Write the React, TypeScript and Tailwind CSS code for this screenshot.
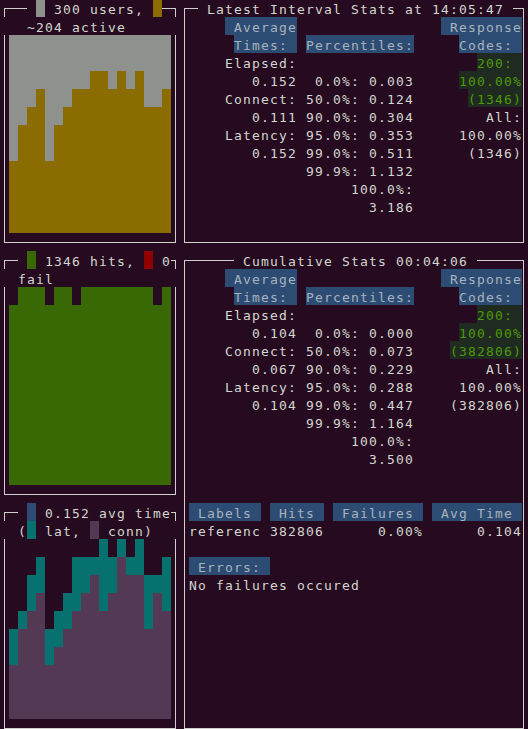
import React from 'react';

const users = [4, 6, 7, 8, 4, 6, 7, 8, 8, 9, 9, 8, 9, 8, 9, 7, 7, 8];
const hits = [10, 11, 11, 11, 10, 11, 11, 10, 11, 11, 11, 11, 11, 11, 11, 11, 10, 11];
const lat = [5, 6, 8, 9, 5, 6, 7, 9, 9, 9, 10, 9, 10, 9, 10, 8, 8, 9];
const conn = [3, 5, 6, 7, 3, 4, 5, 6, 7, 8, 6, 7, 9, 8, 8, 5, 7, 6];

type Cell = string | { t: string; hl?: 'blue' | 'green' };

function Hl({ t, kind }: { t: string; kind?: 'blue' | 'green' }) {
    if (kind === 'green') {
        return <span className="inline-block h-[18px] align-top bg-[#1f2b20] text-[#4e9a06]">{t}</span>;
    }
    return <span className="inline-block h-[18px] align-top bg-[#2d4c74] text-[#a9b3be]">{t}</span>;
}

function Block({ color }: { color: string }) {
    return <span className={`inline-block w-[9px] h-[18px] align-top ${color}`} />;
}

function StatCol({ rows, w }: { rows: Cell[]; w: string }) {
    return (
        <div className={`${w} flex flex-col items-end`}>
            {rows.map((r, i) => (
                <div key={i} className="h-[18px] leading-[21px] whitespace-pre">
                    {typeof r === 'string' ? r : <Hl t={r.t} kind={r.hl} />}
                </div>
            ))}
        </div>
    );
}

function Stats({ a, b, c }: { a: Cell[]; b: Cell[]; c: Cell[] }) {
    return (
        <div className="flex ml-[4px]">
            <StatCol rows={a} w="w-[108px]" />
            <StatCol rows={b} w="w-[117px]" />
            <StatCol rows={c} w="w-[108px]" />
        </div>
    );
}

const head = (blue: boolean): { a: Cell[]; b: Cell[]; c: Cell[] } => ({
    a: [{ t: ' Average' }, { t: 'Times: ' }],
    b: ['', { t: 'Percentiles:' }],
    c: [{ t: ' Response' }, { t: 'Codes: ' }],
});

export default function App() {
    const h = head(true);
    return (
        <div className="w-[528px] h-[729px] overflow-hidden bg-[#250a20] text-[#d3d7cf] font-['DejaVu_Sans_Mono',monospace] text-[13px] tracking-[1.173px]">
            <div className="flex mt-[-1px]">
                {/* left column: graphs */}
                <div className="w-[180px] shrink-0 flex flex-col">
                    {/* users */}
                    <div className="h-[252px] pt-[9px]">
                        <div className="ml-[4px] w-[172px] h-[235px] border border-[#cfd0cc]">
                            <div className="mt-[-10px] ml-[22px] w-fit h-[18px] leading-[21px] whitespace-pre bg-[#250a20]">
                                {' '}<Block color="bg-[#8e918c]" />{' 300 users, '}<Block color="bg-[#8b6c00]" />
                            </div>
                            <div className="ml-[-5px] w-[176px] pl-[27px] h-[18px] leading-[21px] whitespace-pre bg-[#250a20]">~204 active</div>
                            <div className="ml-[4px] w-[162px] h-[198px] flex items-end bg-[#8e918c]">
                                {users.map((v, i) => (
                                    <div key={i} className="w-[9px] bg-[#8b6c00]" style={{ height: v * 18 }} />
                                ))}
                            </div>
                        </div>
                    </div>
                    {/* hits */}
                    <div className="h-[252px] pt-[9px]">
                        <div className="ml-[4px] w-[172px] h-[235px] border border-[#cfd0cc]">
                            <div className="mt-[-10px] ml-[13px] w-fit h-[18px] leading-[21px] whitespace-pre bg-[#250a20]">
                                {' '}<Block color="bg-[#386904]" />{' 1346 hits, '}<Block color="bg-[#8f0000]" />{' 0'}
                            </div>
                            <div className="ml-[-5px] w-[176px] pl-[18px] h-[18px] leading-[21px] whitespace-pre bg-[#250a20]">fail</div>
                            <div className="ml-[4px] w-[162px] h-[198px] flex items-end">
                                {hits.map((v, i) => (
                                    <div key={i} className="w-[9px] bg-[#386904]" style={{ height: v * 18 }} />
                                ))}
                            </div>
                        </div>
                    </div>
                    {/* times */}
                    <div className="h-[234px] pt-[9px]">
                        <div className="ml-[4px] w-[172px] h-[217px] border border-[#cfd0cc]">
                            <div className="mt-[-10px] ml-[13px] w-fit h-[18px] leading-[21px] whitespace-pre bg-[#250a20]">
                                {' '}<Block color="bg-[#2d4c74]" />{' 0.152 avg time'}
                            </div>
                            <div className="ml-[-5px] w-[176px] pl-[18px] h-[18px] leading-[21px] whitespace-pre bg-[#250a20]">
                                {'('}<Block color="bg-[#07716f]" />{' lat, '}<Block color="bg-[#533953]" />{' conn)'}
                            </div>
                            <div className="ml-[4px] w-[162px] h-[180px] flex items-end">
                                {lat.map((v, i) => (
                                    <div key={i} className="w-[9px] flex flex-col">
                                        <div className="bg-[#07716f]" style={{ height: (v - conn[i]) * 18 }} />
                                        <div className="bg-[#533953]" style={{ height: conn[i] * 18 }} />
                                    </div>
                                ))}
                            </div>
                        </div>
                    </div>
                </div>

                {/* right column: stats */}
                <div className="w-[348px] shrink-0 flex flex-col">
                    <div className="h-[252px] pt-[9px]">
                        <div className="ml-[4px] w-[340px] h-[235px] border border-[#cfd0cc]">
                            <div className="mt-[-10px] ml-[13px] w-fit h-[18px] leading-[21px] whitespace-pre bg-[#250a20]">
                                {' Latest Interval Stats at 14:05:47 '}
                            </div>
                            <Stats
                                a={[...h.a, 'Elapsed:', '0.152', 'Connect:', '0.111', 'Latency:', '0.152']}
                                b={[...h.b, '', '0.0%: 0.003', '50.0%: 0.124', '90.0%: 0.304', '95.0%: 0.353', '99.0%: 0.511', '99.9%: 1.132', '100.0%:', '3.186']}
                                c={[...h.c, { t: '200: ', hl: 'green' }, { t: '100.00%', hl: 'green' }, { t: '(1346)', hl: 'green' }, 'All:', '100.00%', '(1346)']}
                            />
                        </div>
                    </div>
                    <div className="h-[480px] pt-[9px]">
                        <div className="ml-[4px] w-[340px] h-[469px] border border-[#cfd0cc]">
                            <div className="mt-[-10px] ml-[49px] w-fit h-[18px] leading-[21px] whitespace-pre bg-[#250a20]">
                                {' Cumulative Stats 00:04:06 '}
                            </div>
                            <Stats
                                a={[...h.a, 'Elapsed:', '0.104', 'Connect:', '0.067', 'Latency:', '0.104']}
                                b={[...h.b, '', '0.0%: 0.000', '50.0%: 0.073', '90.0%: 0.229', '95.0%: 0.288', '99.0%: 0.447', '99.9%: 1.164', '100.0%:', '3.500']}
                                c={[...h.c, { t: '200: ', hl: 'green' }, { t: '100.00%', hl: 'green' }, { t: '(382806)', hl: 'green' }, 'All:', '100.00%', '(382806)']}
                            />
                            <div className="h-[36px]" />
                            <div className="ml-[4px] flex gap-[9px] h-[18px] leading-[21px] whitespace-pre">
                                <span className="w-[72px] text-center bg-[#2d4c74] text-[#a9b3be]">Labels</span>
                                <span className="w-[54px] text-center bg-[#2d4c74] text-[#a9b3be]">Hits</span>
                                <span className="w-[90px] text-center bg-[#2d4c74] text-[#a9b3be]">Failures</span>
                                <span className="w-[90px] text-center bg-[#2d4c74] text-[#a9b3be]">Avg Time</span>
                            </div>
                            <div className="ml-[4px] flex gap-[9px] h-[18px] leading-[21px] whitespace-pre">
                                <span className="w-[72px]">referenc</span>
                                <span className="w-[54px]">382806</span>
                                <span className="w-[90px] text-right">0.00%</span>
                                <span className="w-[90px] text-right">0.104</span>
                            </div>
                            <div className="h-[18px]" />
                            <div className="ml-[4px] h-[18px] leading-[21px] whitespace-pre">
                                <Hl t=" Errors: " />
                            </div>
                            <div className="ml-[4px] h-[18px] leading-[21px] whitespace-pre">No failures occured</div>
                        </div>
                    </div>
                </div>
            </div>
        </div>
    );
}
